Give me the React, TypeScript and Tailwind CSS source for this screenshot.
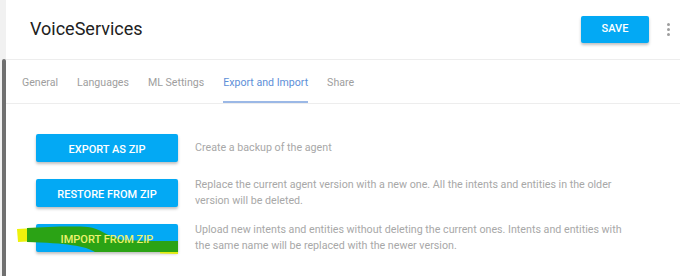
import React from 'react';

const tabs = ['General', 'Languages', 'ML Settings', 'Export and Import', 'Share'];

const rows = [
  { label: 'EXPORT AS ZIP', text: 'Create a backup of the agent' },
  {
    label: 'RESTORE FROM ZIP',
    text: 'Replace the current agent version with a new one. All the intents and entities in the older version will be deleted.',
  },
  {
    label: 'IMPORT FROM ZIP',
    text: 'Upload new intents and entities without deleting the current ones. Intents and entities with the same name will be replaced with the newer version.',
    marked: true,
  },
];

const Highlight = () => (
  <svg
    className="absolute left-[-20px] top-[-6px] pointer-events-none"
    width="170"
    height="40"
    viewBox="0 0 170 40"
  >
    <path d="M1,11 L20,10 L21,23 L2,24 Z" fill="#eef20c" />
    <path d="M144,33.5 L162,34 L162,36 L144,35.5 Z" fill="#e4ec10" />
    <path
      d="M11,10 C30,9 55,8 72,9 C84,10 90,18 106,22 C125,23 145,23 162,23 L162,34 L79,34 C70,28 50,25 11,24 Z"
      fill="#2ba315"
    />
  </svg>
);

const App = () => {
  return (
    <div className="flex w-[680px] h-[276px] bg-white overflow-hidden font-['Roboto',sans-serif]">
      <div className="w-[6px] flex flex-col bg-[#f1f1f1]">
        <div className="h-[59px]" />
        <div className="flex-1 ml-[2px] w-[4px] rounded-t-[2px] bg-[#707070]" />
      </div>

      <div className="flex-1 flex flex-col">
        <div className="h-[60px] flex items-center justify-between border-b border-[#ededed]">
          <h1 className="pl-[24px] pb-[2px] text-[18px] text-[#212121]">VoiceServices</h1>
          <div className="flex items-center pr-[10px]">
            <button className="w-[68px] h-[27px] bg-[#03a9f4] text-white text-[11px] font-medium rounded-[2px] shadow-[0_2px_3px_rgba(0,0,0,0.25)]">
              SAVE
            </button>
            <div className="ml-[18px] flex flex-col gap-[2px]">
              <span className="w-[3px] h-[3px] rounded-full bg-[#9e9e9e]" />
              <span className="w-[3px] h-[3px] rounded-full bg-[#9e9e9e]" />
              <span className="w-[3px] h-[3px] rounded-full bg-[#9e9e9e]" />
            </div>
          </div>
        </div>

        <div className="h-[44px] flex items-stretch gap-[19px] pl-[16px] border-b border-[#ededed]">
          {tabs.map((t) => (
            <div
              key={t}
              className={
                t === 'Export and Import'
                  ? 'flex items-center pt-[5px] border-b-2 border-[#9bb8e6] text-[10.6px] text-[#5d8fd8]'
                  : 'flex items-center pt-[5px] border-b-2 border-transparent text-[10.6px] text-[#9e9e9e]'
              }
            >
              {t}
            </div>
          ))}
        </div>

        <div className="flex flex-col pt-[21px] pl-[30px]">
          {rows.map((r) => (
            <div key={r.label} className="h-[45px] flex items-center">
              <button className="relative w-[142px] h-[28px] shrink-0 bg-[#03a9f4] rounded-[2px] shadow-[0_2px_3px_rgba(0,0,0,0.25)]">
                {r.marked && <Highlight />}
                <span
                  className={
                    r.marked
                      ? 'relative text-[11px] font-medium text-[#ecf26e]'
                      : 'relative text-[11px] font-medium text-white'
                  }
                >
                  {r.label}
                </span>
              </button>
              <p className="ml-[17px] w-[440px] text-[10.7px] leading-[16px] text-[#a8a8a8]">{r.text}</p>
            </div>
          ))}
        </div>
      </div>
    </div>
  );
};

export default App;
